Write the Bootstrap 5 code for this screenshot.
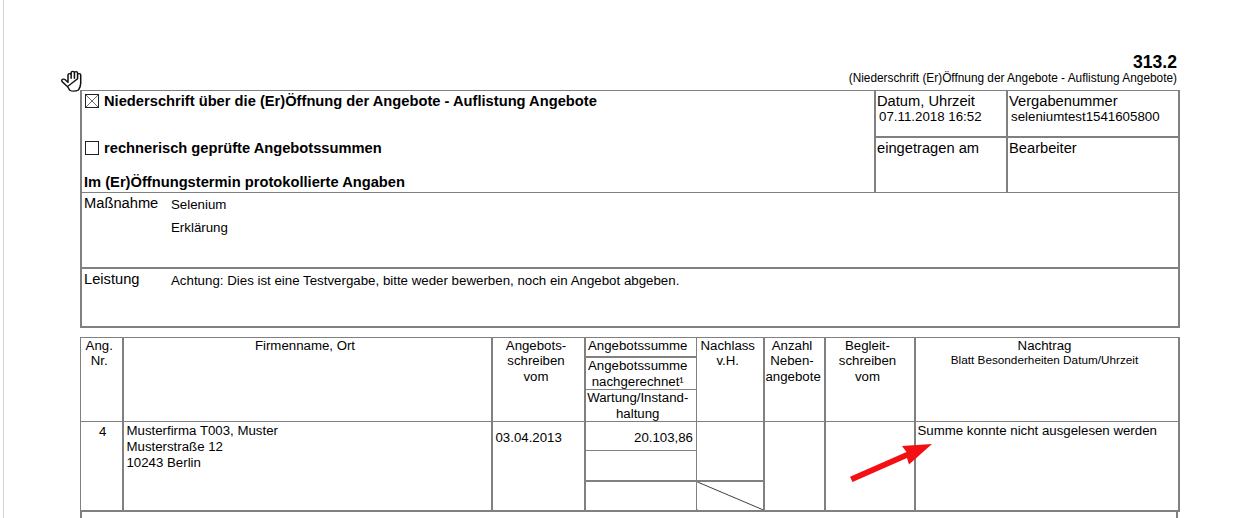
<!DOCTYPE html>
<html lang="de">
<head>
<meta charset="utf-8">
<title>Niederschrift</title>
<link rel="stylesheet" href="https://cdn.jsdelivr.net/npm/bootstrap@5.3.0/dist/css/bootstrap.min.css">
<style>
html,body{height:518px;overflow:hidden;background:#fff}
body{font-family:"Liberation Sans",Arial,sans-serif;font-size:14.7px;line-height:16px;color:#000}
.seite{position:relative;height:518px;margin-left:3px;border-left:1px solid #d4d4d4;padding:53px 0 0 76px;overflow:hidden}
.blatt{width:1098px}
.nummer{font-size:17.6px;line-height:19px;padding-right:1px}
.titel{font-size:11.85px;line-height:12px;padding-right:1px;margin-bottom:4px;height:14px}
.tab{table-layout:fixed;width:1098px;border-collapse:collapse}
.tab td{border:1px solid #808080;vertical-align:top;padding:0 1px;overflow:hidden}
.kasten{width:14px;height:14px;border:1px solid #222;flex:none;display:block;margin-right:5px}
.fett{font-weight:700}
.klein{font-size:13.3px;line-height:15px}
.lab{width:87px;flex:none}
.tab2{margin-top:9px}
.tab2 td{padding:0 1px;line-height:15.5px;font-size:13.25px}
.tab2 td.text-center{padding:0 5px 0 1px}
.tab2 td.summe{padding:0 6px 0 0}
.eng{font-size:11.75px;line-height:13px}
.zeile{height:20px}
.rh32{height:32px}
.rh30{height:30px}
.rh29{height:29px}
.diag{background:linear-gradient(to top right,transparent calc(50% - .8px),#222 50%,transparent calc(50% + .8px))}
.pfeil{position:absolute;left:0;top:0;pointer-events:none}
.hand{position:absolute;left:57px;top:70px}
.wei2{border-left-width:2px!important}
.dick-r{border-right-width:2px!important}
.fuss{height:20px;border:solid #808080;border-width:0 2px}
.kopf{padding-top:2px!important}
.daten{line-height:16px!important}
</style>
</head>
<body>
<div class="seite">
<svg class="hand" width="21" height="22" viewBox="1 .5 18 22.500" preserveAspectRatio="none" fill="none" stroke="#111" stroke-width="1.3" stroke-linejoin="round" stroke-linecap="round">
<path d="M6.500 17.500 2.300 12.800C1.200 11.500 1.600 10 2.800 9.800 4 9.600 5 10.500 6 12L7 13V5.500C7 3.700 9.600 3.700 9.700 5.500M9.700 9V3.300C9.700 1.300 12.500 1.300 12.500 3.300V9M12.500 9V3.600C12.500 1.800 15.200 1.800 15.200 3.600V9.500M15.200 9.500V5.500C15.200 3.700 17.900 3.800 17.900 5.700V14C17.900 17 17 19 16 21 13.500 22.400 10.500 22.400 8.500 21.200 7.800 20 7.500 18.700 6.500 17.500Z"/>
</svg>
<svg class="pfeil" width="1234" height="518" viewBox="4 0 1234 518">
<path d="M850 476.800 906.500 452 902 446 932 444 909 464.500 907 458 852.500 482Z" fill="#f40f14"/>
</svg>
<div class="blatt">
<div class="text-end fw-bold nummer">313.2</div>
<div class="text-end titel">(Niederschrift (Er)Öffnung der Angebote - Auflistung Angebote)</div>
<table class="tab">
<colgroup><col style="width:794px"><col style="width:132px"><col style="width:172px"></colgroup>
<tr style="height:46px">
<td rowspan="2" class="dick-r wei2" style="padding:0 2px">
<div class="d-flex align-items-center fett" style="height:16px;margin-top:2px;padding-left:1px">
<svg class="kasten" viewBox="0 0 14 14"><path d="M0 0 14 14M14 0 0 14" stroke="#444" stroke-width=".9"/></svg>Niederschrift über die (Er)Öffnung der Angebote - Auflistung Angebote</div>
<div class="d-flex align-items-center fett" style="height:16px;margin-top:31px;padding-left:1px">
<span class="kasten"></span>rechnerisch geprüfte Angebotssummen</div>
<div class="fett" style="margin-top:18px">Im (Er)Öffnungstermin protokollierte Angaben</div>
</td>
<td class="dick-r kopf">Datum, Uhrzeit<div class="klein" style="padding-left:2px">07.11.2018 16:52</div></td>
<td class="dick-r kopf">Vergabenummer<div class="klein" style="padding-left:2px">seleniumtest1541605800</div></td>
</tr>
<tr style="height:56px">
<td class="dick-r kopf" style="border-top-width:2px">eingetragen am</td>
<td class="dick-r kopf" style="border-top-width:2px">Bearbeiter</td>
</tr>
<tr style="height:75px">
<td colspan="3" class="wei2 dick-r" style="padding:0 2px">
<div class="d-flex" style="padding-top:2px"><div class="lab">Maßnahme</div>
<div class="klein"><div style="padding-top:2px">Selenium</div><div style="padding-top:8px">Erklärung</div></div></div>
</td>
</tr>
<tr style="height:59px">
<td colspan="3" class="wei2 dick-r" style="padding:0 2px;border-top-width:2px;border-bottom-width:2px">
<div class="d-flex" style="padding-top:2px"><div class="lab">Leistung</div>
<div class="klein" style="padding-top:2px">Achtung: Dies ist eine Testvergabe, bitte weder bewerben, noch ein Angebot abgeben.</div></div>
</td>
</tr>
</table>
<table class="tab tab2">
<colgroup><col style="width:42px"><col style="width:369px"><col style="width:93px"><col style="width:112px"><col style="width:67px"><col style="width:61px"><col style="width:90px"><col style="width:264px"></colgroup>
<tr class="zeile">
<td rowspan="3" class="text-center dick-r">Ang.<br>Nr.</td>
<td rowspan="3" class="text-center dick-r">Firmenname, Ort</td>
<td rowspan="3" class="text-center dick-r">Angebots-<br>schreiben<br>vom</td>
<td class="text-center summe" style="border-bottom-width:2px">Angebotssumme</td>
<td rowspan="3" class="text-center dick-r">Nachlass<br>v.H.</td>
<td rowspan="3" class="text-center dick-r">Anzahl<br>Neben-<br>angebote</td>
<td rowspan="3" class="text-center dick-r">Begleit-<br>schreiben<br>vom</td>
<td rowspan="3" class="text-center dick-r">Nachtrag<div class="eng">Blatt Besonderheiten Datum/Uhrzeit</div></td>
</tr>
<tr class="rh32"><td class="text-center summe">Angebotssumme<br>nachgerechnet¹</td></tr>
<tr class="rh32"><td class="text-center summe">Wartung/Instand-<br>haltung</td></tr>
<tr class="rh29">
<td rowspan="3" class="dick-r" style="padding:2px 0 0 18px;border-bottom-width:2px">4</td>
<td rowspan="3" class="dick-r daten" style="padding:1px 2px 0 3px;border-bottom-width:2px">Musterfirma T003, Muster<br>Musterstraße 12<br>10243 Berlin</td>
<td rowspan="3" class="dick-r" style="padding:8px 2px 0 3px;border-bottom-width:2px">03.04.2013</td>
<td class="text-end" style="padding:8px 3px 0 0">20.103,86</td>
<td rowspan="2" style="border-bottom-width:2px"></td>
<td rowspan="3" class="dick-r wei2" style="border-bottom-width:2px"></td>
<td rowspan="3" class="dick-r" style="border-bottom-width:2px"></td>
<td rowspan="3" class="dick-r" style="padding:1px 2px 0;border-bottom-width:2px">Summe konnte nicht ausgelesen werden</td>
</tr>
<tr class="rh30"><td style="border-bottom-width:2px"></td></tr>
<tr class="rh30"><td style="border-bottom-width:2px"></td><td class="diag" style="border-bottom-width:2px"></td></tr>
</table>
<div class="fuss"></div>
</div>
</div>
</body>
</html>
